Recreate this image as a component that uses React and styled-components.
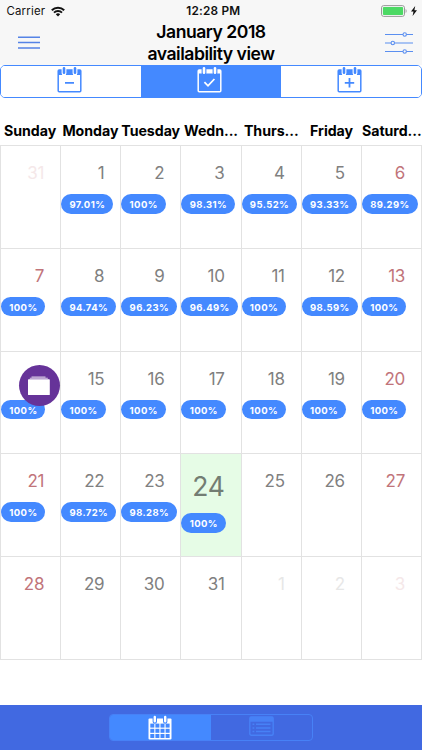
import React from "react";
import styled, { createGlobalStyle } from "styled-components";

const BLUE = "#4489ff";
const MUTED_BLUE = "#4781f6";

const GlobalStyle = createGlobalStyle`
  * { box-sizing: border-box; }
  body { margin: 0; background: #fff; font-family: Inter, "Liberation Sans", sans-serif; overflow: hidden; }
`;

const Screen = styled.div`
  width: 422px;
  height: 750px;
  display: flex;
  flex-direction: column;
  background: #fff;
`;

const Header = styled.header`
  height: 65px;
  flex: none;
  background: #f7f7f7;
`;

const StatusBar = styled.div`
  height: 21px;
  padding: 1px 5px 0 6.5px;
  display: grid;
  grid-template-columns: 1fr auto 1fr;
  align-items: center;
  font-size: 11.4px;
  line-height: 20px;
  color: #111;
`;

const Carrier = styled.span`
  display: flex;
  align-items: center;
  gap: 6px;
  letter-spacing: 0.2px;
`;

const Clock = styled.span`
  font-size: 11.8px;
  font-weight: 600;
  letter-spacing: 0.2px;
  padding-left: 3px;
`;

const Power = styled.span`
  display: flex;
  align-items: center;
  justify-content: flex-end;
  gap: 3px;
`;

const TitleBar = styled.div`
  height: 44px;
  display: grid;
  grid-template-columns: 60px 1fr 60px;
`;

const Title = styled.h1`
  margin: 0;
  font-size: 17.6px;
  font-weight: 600;
  line-height: 22px;
  text-align: center;
  letter-spacing: -0.5px;
  color: #000;
`;

const IconButton = styled.button`
  border: 0;
  padding: ${(p) => p.$pad};
  background: none;
  display: flex;
  align-items: flex-start;
`;

const ModeTabs = styled.nav`
  height: 33px;
  flex: none;
  display: grid;
  grid-template-columns: repeat(3, 1fr);
  border: 1px solid ${BLUE};
  border-radius: 5px;
  overflow: hidden;
`;

const ModeTab = styled.button`
  border: 0;
  padding: 0 3px 4px 0;
  display: flex;
  align-items: center;
  justify-content: center;
  color: ${(p) => (p.$active ? "#fff" : BLUE)};
  background: ${(p) => (p.$active ? BLUE : "#fff")};
`;

const Weekdays = styled.div`
  height: 47px;
  flex: none;
  padding-top: 22px;
  display: grid;
  grid-template-columns: repeat(7, minmax(0, 1fr));
`;

const Weekday = styled.div`
  font-size: 14.2px;
  line-height: 21px;
  font-weight: 650;
  text-align: center;
  white-space: nowrap;
  letter-spacing: -0.05px;
  color: #000;
`;

const Grid = styled.main`
  height: 515px;
  flex: none;
  display: grid;
  grid-template-columns: repeat(7, 1fr);
  grid-template-rows: repeat(5, 1fr);
  border-left: 1px solid #e2e2e2;
  border-top: 1px solid #e2e2e2;
`;

const Day = styled.div`
  border-right: 1px solid #e2e2e2;
  border-bottom: 1px solid #e2e2e2;
  display: flex;
  flex-direction: column;
  align-items: flex-start;
  background: ${(p) => (p.$today ? "#e6fce6" : "#fff")};
`;

const dayColor = ({ $outside, $weekend, $today }) => {
  if ($outside) return $weekend ? "#f5e8e9" : "#e7e7e7";
  if ($today) return "#737d73";
  return $weekend ? "#c1747a" : "#808080";
};

const DayNumber = styled.span`
  align-self: flex-end;
  margin: 15px 16px 9px 0;
  font-size: ${(p) => (p.$today ? 26.5 : 17)}px;
  line-height: ${(p) => (p.$today ? 35 : 24)}px;
  letter-spacing: -0.3px;
  color: ${dayColor};
`;

const Pill = styled.span`
  height: 19.5px;
  padding: 0 8px 0 8.3px;
  border-radius: 10px;
  background: ${BLUE};
  color: #fff;
  font-size: 9.5px;
  font-weight: 650;
  line-height: 21px;
  letter-spacing: 0.4px;
`;

const Footer = styled.footer`
  height: 45px;
  flex: none;
  margin-top: auto;
  padding-top: 9px;
  display: flex;
  justify-content: center;
  background: #4169e1;
`;

const ViewSwitch = styled.div`
  width: 204px;
  height: 27px;
  display: grid;
  grid-template-columns: 1fr 1fr;
  border: 1px solid ${MUTED_BLUE};
  border-radius: 4px;
  overflow: hidden;
`;

const ViewOption = styled.button`
  border: 0;
  padding: ${(p) => (p.$active ? "0 2px 0 0" : "0")};
  display: flex;
  align-items: flex-start;
  justify-content: center;
  background: ${(p) => (p.$active ? BLUE : "transparent")};
`;

const FloatingButton = styled.button`
  position: absolute;
  left: 18.5px;
  top: 364.5px;
  width: 41px;
  height: 41px;
  border: 0;
  padding: 0;
  border-radius: 50%;
  background: #663399;
  display: flex;
  align-items: center;
  justify-content: center;
`;

const WifiIcon = () => (
  <svg width="14" height="11" viewBox="0 0 14 11" fill="none" stroke="#111" strokeWidth="2">
    <path d="M.8 4.2a8.8 8.8 0 0 1 12.4 0M3 6.6a5.7 5.7 0 0 1 8 0" />
    <path d="M4.8 8.3a3.1 3.1 0 0 1 4.4 0L7 10.5Z" fill="#111" stroke="none" />
  </svg>
);

const BatteryIcon = () => (
  <svg width="27" height="12" viewBox="0 0 27 12">
    <rect x=".5" y=".6" width="23" height="10.8" rx="2.2" fill="none" stroke="#999" />
    <rect x="1.9" y="2" width="20.2" height="8" rx="1" fill="#4cd964" />
    <path d="M24.6 4v4q1-.5 1-2t-1-2" fill="#999" />
  </svg>
);

const BoltIcon = () => (
  <svg width="6" height="10" viewBox="0 0 6 10">
    <path d="M4.2 0 0 5.6h2.5L1.6 10 6 4.2H3.4Z" fill="#111" />
  </svg>
);

const MenuIcon = () => (
  <svg width="22" height="14" viewBox="0 0 22 14" stroke="#5583e6" strokeWidth="1.5">
    <path d="M0 1.2h22M0 6.6h22M0 12h22" />
  </svg>
);

const FilterIcon = () => (
  <svg width="28" height="22" viewBox="0 0 28 22" fill="none" stroke="#5b8ff0" strokeWidth="1.1">
    <path d="M0 2.5h18M21.4 2.5H28M0 11h6M9.6 11H28M0 19.5h18M21.4 19.5H28" />
    <circle cx="19.7" cy="2.5" r="1.7" />
    <circle cx="7.8" cy="11" r="1.7" />
    <circle cx="19.7" cy="19.5" r="1.7" />
  </svg>
);

const symbols = {
  minus: "M8 16.8h9",
  check: "m7.4 16.2 3.6 3.6 6.4-6.8",
  plus: "M7.8 16.8h9.4M12.5 12.1v9.4",
};

const CalendarIcon = ({ symbol, gap }) => (
  <svg width="25" height="27" viewBox="0 0 25 27" fill="none" stroke="currentColor">
    <rect x="1.2" y="4" width="22.6" height="21.8" rx="1" strokeWidth="1.5" />
    <path
      d={symbol === "check" ? "M1 4h23v3.6H1Z" : "M1 4h23v5H1Z"}
      fill="currentColor"
      stroke="none"
    />
    <path d="M7 2.3v5M18 2.3v5" stroke={gap} strokeWidth="4.8" strokeLinecap="round" />
    <path d="M7 2.3v4.4M18 2.3v4.4" strokeWidth="2.6" strokeLinecap="round" />
    <path d={symbols[symbol]} strokeWidth="1.8" />
  </svg>
);

const MonthIcon = () => (
  <svg width="24" height="25" viewBox="0 0 24 25">
    <path d="M1.5 3.5h21q1 0 1 1v19q0 1-1 1h-21q-1 0-1-1v-19q0-1 1-1Z" fill="#fff" />
    <path d="M6.8 2v4.5M17.2 2v4.5" stroke={BLUE} strokeWidth="4.4" strokeLinecap="round" />
    <path d="M6.8 2v4.3M17.2 2v4.3" stroke="#fff" strokeWidth="2.4" strokeLinecap="round" />
    <g fill={BLUE}>
      {[8.6, 13.8, 19].map((y) =>
        [2.3, 7.4, 12.5, 17.6].map((x) => <rect key={`${x}-${y}`} x={x} y={y} width="4" height="4" />)
      )}
    </g>
  </svg>
);

const AgendaIcon = () => (
  <svg width="25" height="21" viewBox="0 0 25 21" fill="none" stroke={MUTED_BLUE}>
    <rect x=".8" y="2" width="23.4" height="18.2" rx="1.5" strokeWidth="1.4" />
    <path d="M1 1.8h23v5H1Z" fill={MUTED_BLUE} stroke="none" />
    <path d="M7 9.3h14.5M7 12.9h14.5M7 16.5h14.5" strokeWidth="1.5" />
    <path d="M3.5 9.3h1.8M3.5 12.9h1.8M3.5 16.5h1.8" strokeWidth="1.5" />
  </svg>
);

const FolderIcon = () => (
  <svg width="24" height="21" viewBox="0 0 24 21" fill="#fff">
    <path d="M4.5 1.4h14v1H4.5ZM2.8 2.8h18v1H2.8Z" opacity=".75" />
    <rect x="1" y="4.3" width="21.8" height="15.8" rx=".7" />
  </svg>
);

const weekdays = ["Sunday", "Monday", "Tuesday", "Wedn...", "Thurs...", "Friday", "Saturd..."];

const rates = {
  1: "97.01%", 2: "100%", 3: "98.31%", 4: "95.52%", 5: "93.33%", 6: "89.29%",
  7: "100%", 8: "94.74%", 9: "96.23%", 10: "96.49%", 11: "100%", 12: "98.59%", 13: "100%",
  14: "100%", 15: "100%", 16: "100%", 17: "100%", 18: "100%", 19: "100%", 20: "100%",
  21: "100%", 22: "98.72%", 23: "98.28%", 24: "100%",
};

const days = Array.from({ length: 35 }, (_, i) => {
  const outside = i === 0 || i > 31;
  return {
    number: i === 0 ? 31 : i > 31 ? i - 31 : i,
    outside,
    weekend: i % 7 === 0 || i % 7 === 6,
    today: i === 24,
    rate: outside ? undefined : rates[i],
  };
});

export default function App() {
  return (
    <Screen>
      <GlobalStyle />
      <Header>
        <StatusBar>
          <Carrier>Carrier <WifiIcon /></Carrier>
          <Clock>12:28 PM</Clock>
          <Power><BatteryIcon /><BoltIcon /></Power>
        </StatusBar>
        <TitleBar>
          <IconButton $pad="15px 0 0 18px" aria-label="Menu"><MenuIcon /></IconButton>
          <Title>January 2018<br />availability view</Title>
          <IconButton $pad="11px 0 0 23px" aria-label="Filters"><FilterIcon /></IconButton>
        </TitleBar>
      </Header>
      <ModeTabs>
        <ModeTab aria-label="Unavailable"><CalendarIcon symbol="minus" gap="#fff" /></ModeTab>
        <ModeTab $active aria-label="Availability"><CalendarIcon symbol="check" gap={BLUE} /></ModeTab>
        <ModeTab aria-label="Add"><CalendarIcon symbol="plus" gap="#fff" /></ModeTab>
      </ModeTabs>
      <Weekdays>
        {weekdays.map((name) => <Weekday key={name}>{name}</Weekday>)}
      </Weekdays>
      <Grid>
        {days.map((day, i) => (
          <Day key={i} $today={day.today}>
            <DayNumber $today={day.today} $outside={day.outside} $weekend={day.weekend}>{day.number}</DayNumber>
            {day.rate && <Pill>{day.rate}</Pill>}
          </Day>
        ))}
      </Grid>
      <Footer>
        <ViewSwitch>
          <ViewOption $active aria-label="Month"><MonthIcon /></ViewOption>
          <ViewOption aria-label="Agenda"><AgendaIcon /></ViewOption>
        </ViewSwitch>
      </Footer>
      <FloatingButton aria-label="Folder"><FolderIcon /></FloatingButton>
    </Screen>
  );
}
